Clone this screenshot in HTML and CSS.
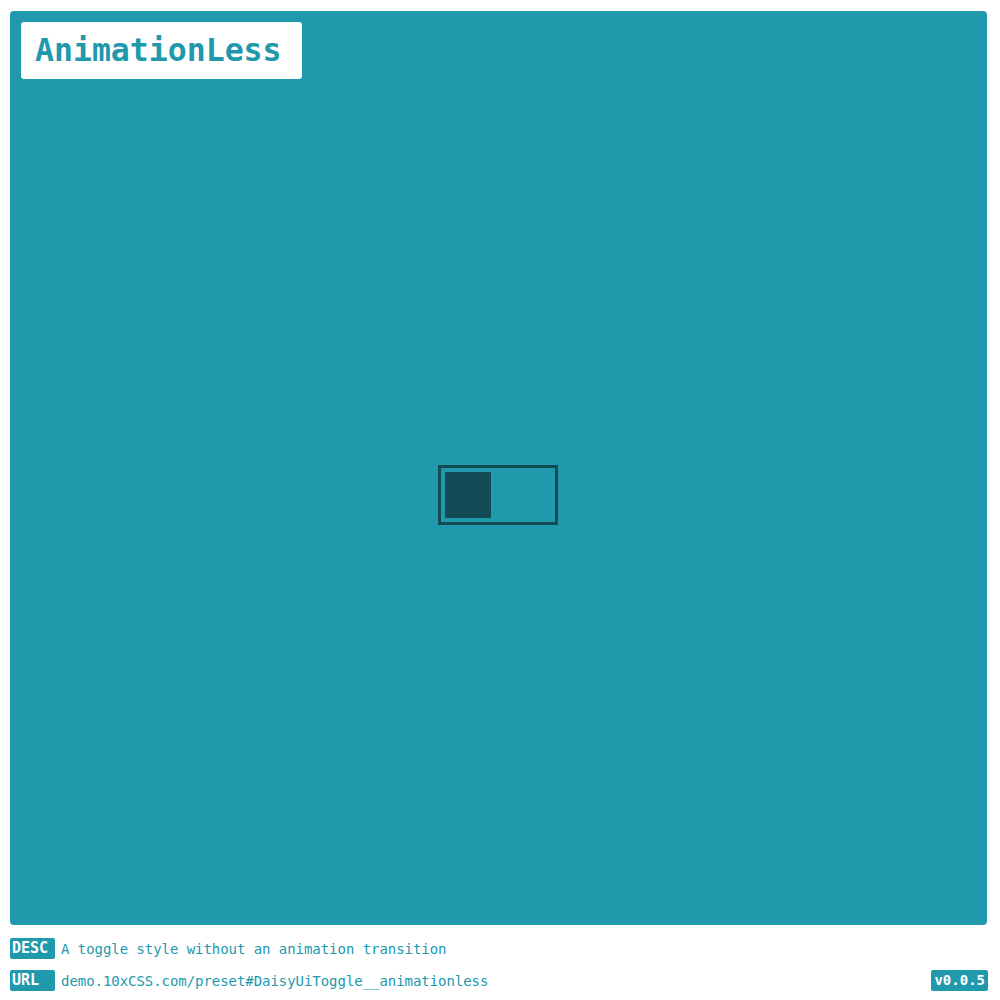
FILE: index.html
```html
<!DOCTYPE html>
<html>
<head>
<meta charset="utf-8">
<link rel="stylesheet" href="styles.css">
</head>
<body>
<main class="stage">
  <div class="title">AnimationLess</div>
  <div class="center">
    <div class="toggle"><div class="knob"></div></div>
  </div>
</main>
<footer class="meta">
  <div class="row"><span class="badge">DESC</span><span class="text">A toggle style without an animation transition</span></div>
  <div class="row"><span class="badge">URL</span><span class="text">demo.10xCSS.com/preset#DaisyUiToggle__animationless</span><span class="version">v0.0.5</span></div>
</footer>
</body>
</html>
```
FILE: styles.css
```css
* { box-sizing: border-box; }
html, body { margin: 0; background: #fff; }
body {
  padding: 11px 12px 0 10px;
  font-family: "DejaVu Sans Mono", "Liberation Mono", monospace;
  width: 1000px;
  height: 1000px;
}
.stage {
  background: #2199ad;
  border-radius: 4px;
  height: 914px;
  width: 977px;
  padding: 11px;
  display: flex;
  flex-direction: column;
}
.title {
  align-self: flex-start;
  background: #fff;
  border-radius: 3px;
  color: #2199ad;
  font-weight: bold;
  font-size: 31.5px;
  height: 57px;
  line-height: 57px;
  padding: 0 20px 0 14px;
}
.center {
  flex: 1;
  display: flex;
  align-items: center;
  justify-content: center;
  padding-bottom: 3px;
  padding-right: 1px;
}
.toggle {
  width: 120px;
  height: 60px;
  border: 3px solid #124a55;
  padding: 4px;
}
.knob {
  width: 46px;
  height: 46px;
  background: #124a55;
}
.meta {
  padding-top: 13px;
  width: 978px;
}
.row {
  display: flex;
  align-items: center;
  height: 21px;
  margin-bottom: 11px;
}
.badge {
  background: #2199ad;
  color: #fff;
  font-weight: bold;
  font-size: 15px;
  width: 45px;
  height: 21px;
  line-height: 21px;
  padding-left: 2px;
  border-radius: 2px;
}
.text {
  color: #2199ad;
  font-size: 14px;
  margin-left: 6px;
  letter-spacing: -0.05px;
}
.version {
  margin-left: auto;
  background: #2199ad;
  color: #fff;
  font-weight: bold;
  font-size: 14px;
  height: 21px;
  line-height: 21px;
  padding: 0 3px 0 3px;
  border-radius: 2px;
}
```
